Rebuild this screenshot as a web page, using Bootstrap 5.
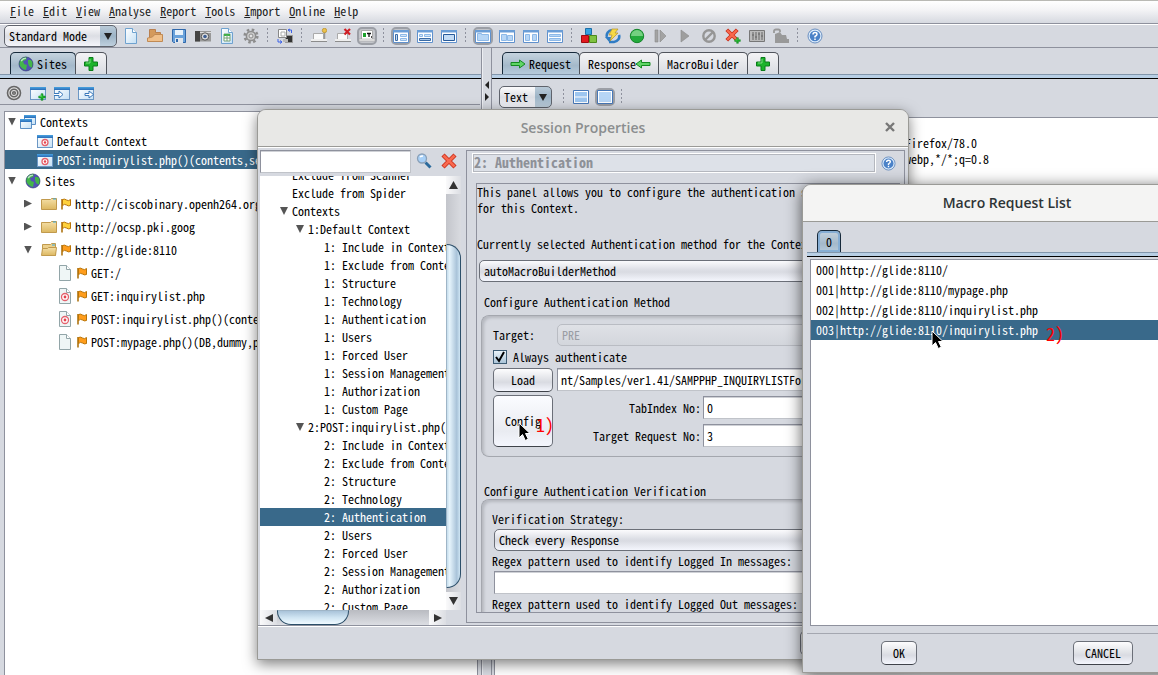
<!DOCTYPE html>
<html lang="en">
<head>
<meta charset="utf-8">
<meta name="viewport" content="width=device-width, initial-scale=1">
<title>Session Properties</title>
<link href="https://cdn.jsdelivr.net/npm/bootstrap@5.3.0/dist/css/bootstrap.min.css" rel="stylesheet">
<style>
:root{--face:#d6d9e0;--edge:#8e919d;--sel:#39698a;--mono:"Noto Sans Mono CJK JP","Liberation Mono","Noto Sans CJK JP",monospace}
body{font:12px/16px var(--mono);color:#000;background:var(--face)}
button,input,select{font:inherit;color:inherit}
svg{display:block;flex:none}
.menubar{height:24px;padding:0 10px;gap:9px;border-top:1px solid #b9b9b4;border-bottom:1px solid var(--edge);background:linear-gradient(#fff,#f4f4f6 40%,#d6d9e0)}
.menubar a{color:#222;text-decoration:none;line-height:20px}
.toolbar{height:24px;padding-left:4px;border-top:1px solid #fff;border-bottom:1px solid var(--edge)}
.tool{width:24px;height:22px;padding:0;border:0;background:none;display:flex;align-items:center;justify-content:center;flex:none}
.tool.on::before{content:"";position:absolute;width:20px;height:18px;border:2px solid #9c9fa6;border-radius:5px;background:#c3c5ca}
.tool.on{position:relative}
.tool svg{position:relative}
.dots{width:10px;height:16px;flex:none;background:linear-gradient(#8e919d 50%,transparent 50%) 4px 0/1px 4px repeat-y}
.combo{appearance:none;height:22px;padding:0 20px 0 4px;border:1px solid #5f636c;border-radius:5px;line-height:20px;
background:url("data:image/svg+xml,%3Csvg xmlns='http://www.w3.org/2000/svg' width='8' height='8'%3E%3Cpath d='M0 1h8L4 8z' fill='%23222'/%3E%3C/svg%3E") right 4px center no-repeat,linear-gradient(#b9cad8,#9db4c6 50%,#bfd0de) right/16px 100% no-repeat,linear-gradient(#fbfbfc,#dcdee4 50%,#f4f5fa)}
.mode{width:113px;margin-right:2px}
.view{width:53px;margin-right:7px}
.viewbar{padding:7px 0 9px 7px}
.tabs{height:27px;padding:4px 0 0 10px;border-bottom:1px solid #8296ab}
.tabs button{height:22px;padding:0 8px;border:1px solid #50545c;border-bottom:0;border-radius:5px 5px 0 0;background:linear-gradient(#f3f3f5,#d9dce2);display:flex;align-items:center;gap:4px;line-height:19px;margin-right:-1px}
.tabs svg{margin:0 -1px}
.tabs .on{border-color:#16293a;background:linear-gradient(#c5d3de,#a4b9ca 60%,#b6cadb)}
.tabs .ringed{box-shadow:inset 0 0 0 2px #86aed4}
.band{height:4px;background:#b8cfe5;border-bottom:1px solid #000}
.leftpane{width:481px;flex:none}
.subtools{height:26px;padding:3px 0 0 2px;border-bottom:1px solid var(--edge);margin-right:1px}
.pane{background:#fff;border:1px solid var(--edge)}
.sitetree{margin:6px 3px 0 4px}
.splitter{width:11px;flex:none;border:1px solid var(--edge);border-width:0 1px;box-shadow:inset 1px 0 #eceef2;padding-top:33px}
.message{padding:1px 0 0 2px;margin-left:2px}
.trow{display:flex;align-items:center;height:19px;white-space:pre;gap:4px}
.trow.tall{height:23px}
.tall .tw{margin-right:5px}
.picked{background:var(--sel);color:#fff}
.tw{width:8px;height:8px;background:#555;clip-path:polygon(0 0,100% 0,50% 100%);flex:none}
.tw.shut{clip-path:polygon(0 0,100% 50%,0 100%)}
.win{position:absolute;border:1px solid #9a9a96;background:var(--face);box-shadow:0 4px 14px rgba(0,0,0,.5);border-radius:9px 9px 0 0}
.caption{height:37px;font:600 14px/35px "Open Sans","Noto Sans",sans-serif;text-align:center;border-bottom:1px solid #9a9a96;border-radius:8px 8px 0 0;background:#e8e8e6;color:#8b8e8f;position:relative}
.close-x{position:absolute;right:11px;top:10px;padding:0;border:0;background:none}
#props{left:257px;top:109px;width:652px;height:551px}
#macro{left:802px;top:184px;width:410px;height:489px;box-shadow:0 3px 16px rgba(0,0,0,.65)}
#macro .caption{background:#f4f4f3;color:#2e3436}
.navcol{width:204px;flex:none;padding:2px 0 0 2px}
.finder{gap:1px;margin-bottom:3px}
.finder .field{width:151px;flex:none}
.field{border:1px solid #8e919d;border-right-color:#c0c3c9;border-bottom-color:#c0c3c9;background:#fff;box-shadow:inset 0 1px #cfd1d6;height:23px;padding:0 3px;border-radius:0;min-width:0}
.opts{width:186px;height:434px;overflow:hidden;background:#fff}
.opts ul{margin-top:-10px}
.opts .trow{height:18px}
.arrowbtn{border:0;padding:0;background:linear-gradient(90deg,#fafafb,#dcdee3);display:flex;align-items:center;justify-content:center;flex:none;width:17px}
.vbar{width:15px;background:linear-gradient(90deg,#c3c5cb,#d9dbe0)}
.vbar .arrowbtn{width:15px;height:18px}
.vthumb{height:344px;border:1px solid #2c4f69;border-left-color:#9fb5c7;border-radius:0 14px 14px 0;background:linear-gradient(90deg,#c5ddec,#e6f4fc 20%,#a9c3d9 75%,#cfe6f5)}
.hbar{height:15px;width:186px;background:linear-gradient(#b9bbc1,#dcdee3)}
.hthumb{width:72px;border:1px solid #2c4f69;border-top-color:#9fb5c7;border-radius:0 0 14px 14px;background:linear-gradient(#a9c3d9,#cfe4f2 50%,#f0faff)}
.detail{border:1px solid var(--edge);margin:2px 3px 2px 4px;padding:2px 4px 10px 5px;min-width:0;height:473px}
.head{height:20px;border:1px solid #fff;outline:1px solid #b4b7be;outline-offset:-2px;background:#dde1e8;color:#8e9198;font:700 14px/17px var(--mono);padding:0 1px}
.detail .tool{height:20px}
.scrollbody{border:1px solid var(--edge);margin:10px 0 0 4px;height:430px;overflow:hidden}
.pick{padding:8px 0 0 2px;margin-bottom:12px}
.legend1{margin:0 0 5px 7px}
.legend2{margin:26px 0 0 7px}
.grp{border:1px solid #a4a7ae;border-right:0;border-radius:8px;margin:0 0 0 4px;box-shadow:inset 2px 2px 3px #b5b8bf;padding:8px 8px 9px 11px;display:flex;flex-direction:column;gap:3px}
.grp.verify{padding:11px 8px 9px 12px;gap:2px}
.grp.verify label{margin-left:-2px}
.lead64{width:64px;flex:none}
.lead146{width:146px;padding-right:2px;text-align:right;flex:none}
.nums{gap:5px}
.drop{appearance:none;width:100%;height:22px;border:1px solid #6b6f78;border-radius:5px;padding:0 4px;background:linear-gradient(#fbfbfd,#dcdee5 45%,#d9dbe2 55%,#f4f6fd);display:block}
.drop:disabled{opacity:1;color:#9a9da4;border-color:#b9bcc3;background:linear-gradient(#dfe1e6,#d3d6dc)}
.push{border:1px solid #6b6f78;border-bottom-color:#3f434a;border-radius:5px;background:linear-gradient(#fdfdfe,#dfe1e6 50%,#d9dbe2 60%,#f4f6fd);padding:0;height:24px;line-height:20px}
.push.big{background:linear-gradient(#fbfcff,#e9ebf1 70%,#f4f6fd);height:52px}
.c60{width:60px;flex:none}
.c46{width:46px}
.c36{width:36px}
.ticks{gap:6px}
.tick{appearance:none;width:14px;height:14px;margin:0;border:1px solid #3d5c74;background:url("data:image/svg+xml,%3Csvg xmlns='http://www.w3.org/2000/svg' width='12' height='12'%3E%3Cpath d='M2 6l3 4 5-9' fill='none' stroke='%23000' stroke-width='2'/%3E%3C/svg%3E") center no-repeat,linear-gradient(#eaf3f9,#aac4d8)}
.foot{border-top:1px solid var(--edge);box-shadow:inset 0 1px #fff;padding-top:5px}
.reqs{margin:2px 0 0 7px;height:367px;width:401px}
.reqs li{height:20px;line-height:19px;padding-left:5px}
.rule{border-top:1px solid #a4a7b0;margin:7px 4px 0}
.answers{padding-top:7px}
.note{position:absolute;color:#f00;font-size:18px;line-height:20px;z-index:3}
.ptr{position:absolute;z-index:4}
</style>
</head>
<body class="vh-100 overflow-hidden d-flex flex-column position-relative">
<svg width="0" height="0" class="position-absolute" aria-hidden="true">
<defs>
<linearGradient id="gb" x2="0" y2="1"><stop stop-color="#4aa3e0"/><stop offset="1" stop-color="#2a6cb8"/></linearGradient>
<linearGradient id="gf" x2="0" y2="1"><stop stop-color="#f5e0a8"/><stop offset="1" stop-color="#dcb760"/></linearGradient>
<linearGradient id="gw" x2="1" y2="1"><stop stop-color="#fff"/><stop offset="1" stop-color="#c4e0f5"/></linearGradient>
<symbol id="plus" viewBox="0 0 16 16"><path d="M6 1.500h4V6h4.500v4H10v4.500H6V10H1.500V6H6z" fill="#1db32b" stroke="#0b7d1a"/><path d="M7 3v4H3" fill="none" stroke="#7be07e"/></symbol>
<symbol id="globe" viewBox="0 0 16 16"><circle cx="8" cy="8" r="7" fill="#5252b4"/><path d="M2 4q3-4 7-3l-1 3-3 1 1 3 3 1-1 5Q3 13 1 8zM10 4l3 0 2 3-1 5-3-2-1-3z" fill="#43b54a"/><path d="M3 5q2-3 5-3" stroke="#b8e8c0" stroke-width="1.500" fill="none"/><circle cx="8" cy="8" r="7" fill="none" stroke="#2c3570" stroke-width=".6"/></symbol>
<symbol id="target" viewBox="0 0 16 16"><g fill="none" stroke="#666" stroke-width="1.600"><circle cx="8" cy="8" r="6.500" fill="#e0e0e0"/><circle cx="8" cy="8" r="3.800"/><circle cx="8" cy="8" r="1.300"/></g></symbol>
<symbol id="frame" viewBox="0 0 16 16"><rect x=".5" y="2.500" width="15" height="12" fill="url(#gw)" stroke="#6c97c4"/><path d="M0 2h16v3H0z" fill="url(#gb)"/></symbol>
<symbol id="frameplus" viewBox="0 0 16 16"><use href="#frame"/><use href="#plus" x="8" y="8" width="8" height="8"/></symbol>
<symbol id="framein" viewBox="0 0 16 16"><use href="#frame"/><path d="M0 8.500h5V6l4 3.500L5 13v-2.500H0" fill="#fff" stroke="#3a79ba"/></symbol>
<symbol id="frameout" viewBox="0 0 16 16"><use href="#frame"/><path d="M7 8.500h4V6l4.500 3.500L11 13v-2.500H7z" fill="#fff" stroke="#3a79ba"/></symbol>
<symbol id="frametgt" viewBox="0 0 16 16"><use href="#frame"/><circle cx="8" cy="9.500" r="3" fill="#fff" stroke="#e4616c" stroke-width="1.300"/><circle cx="8" cy="9.500" r="1.200" fill="#e4414c"/></symbol>
<symbol id="frames" viewBox="0 0 16 16"><path d="M4.500 1.500h11v9h-11z" fill="url(#gw)" stroke="#5a8fc5"/><path d="M4 1h12v3H4z" fill="url(#gb)"/><path d="M.5 5.500h11v9H.5z" fill="url(#gw)" stroke="#5a8fc5"/><path d="M0 5h12v3H0z" fill="url(#gb)"/></symbol>
<symbol id="page" viewBox="0 0 16 16"><path d="M2.500.5h7l4 4v11h-11z" fill="url(#gw)" stroke="#6fa2cf"/><path d="M9.500.5v4h4" fill="#fff" stroke="#6fa2cf"/></symbol>
<symbol id="leaf" viewBox="0 0 16 16"><path d="M2.500.5h7l4 4v11h-11z" fill="#eff6f6" stroke="#92a5a8"/><path d="M9.500.5v4h4" fill="#fff" stroke="#92a5a8"/></symbol>
<symbol id="leaftgt" viewBox="0 0 16 16"><use href="#leaf"/><circle cx="8" cy="9" r="3.500" fill="#fff" stroke="#e4616c" stroke-width="1.300"/><circle cx="8" cy="9" r="1.400" fill="#e4414c"/></symbol>
<symbol id="folder" viewBox="0 0 16 16"><path d="M.5 3.500h9l1-1h5v11H.5z" fill="url(#gf)" stroke="#c19a4d"/><path d="M12 3h3" stroke="#39a8dd"/></symbol>
<symbol id="folderopen" viewBox="0 0 16 16"><path d="M1.500 13.500v-11h8l1-1h4v12z" fill="#ecd08c" stroke="#c19a4d"/><path d="M.5 13.500l1-7h5l1-1h8l-1 8z" fill="url(#gf)" stroke="#c19a4d"/><path d="M11 3h3" stroke="#39a8dd"/></symbol>
<symbol id="open" viewBox="0 0 16 16"><path d="M2.500 12V1.500h6v3h5V13z" fill="#d49a5c" stroke="#b98050"/><path d="M.5 13.500V10q6-.5 7-3.500h8v7z" fill="#f0c08a" stroke="#c08a54"/></symbol>
<symbol id="save" viewBox="0 0 16 16"><path d="M1.500 1.500h13v13h-12l-1-1z" fill="#6aa2db" stroke="#2f68ab"/><path d="M4 2h8v5H4z" fill="#e8f2fb"/><path d="M4 10h8v5H4z" fill="#dfe5ec"/><path d="M5 11h2v3H5z" fill="#2f68ab"/></symbol>
<symbol id="camera" viewBox="0 0 16 16"><path d="M0 3h16v10.500H0z" fill="#989898"/><path d="M0 3h5v10.500H0z" fill="#444"/><path d="M5 4h11v1H5z" fill="#ddd"/><circle cx="10" cy="8.500" r="3.700" fill="#ddd" stroke="#555"/><circle cx="10" cy="8.500" r="1.800" fill="#3e5f93"/></symbol>
<symbol id="sheet" viewBox="0 0 16 16"><use href="#page"/><path d="M5 6h6v7H5z" fill="#fff" stroke="#77a277"/><path d="M5 6h6v2H5z" fill="#3eaf46"/><path d="M5 10h6M8 7v6" stroke="#77a277"/></symbol>
<symbol id="gear" viewBox="0 0 16 16"><circle cx="8" cy="8" r="6.300" fill="none" stroke="#8d8d8d" stroke-width="2.600" stroke-dasharray="2.500 2.440"/><circle cx="8" cy="8" r="4.600" fill="#ccc" stroke="#8d8d8d" stroke-width="1.500"/><circle cx="8" cy="8" r="2" fill="#e4e4e4" stroke="#8d8d8d"/></symbol>
<symbol id="swap" viewBox="0 0 16 16"><path d="M8.500 7.500h7v7h-7z" fill="#333" stroke="#999"/><path d="M6 11h5v3H6z" fill="#bbb"/><path d="M1.500 1.500h8v8h-8z" fill="#fff" stroke="#888"/><path d="M4 4h4v4H4z" fill="#fff" stroke="#aaa"/><path d="M11 2h3.500v3M13 1l-2 1 2 1.500M1 11v3h3.500M3 12.500l2 1.500-2 1.500" fill="none" stroke="#3d62e8"/></symbol>
<symbol id="tab" viewBox="0 0 16 16"><path d="M2.500 11.500v-6h10v6z" fill="#fafafa" stroke="#aaa"/><path d="M0 11h16v2H0z" fill="#eee"/><path d="M0 13.500h16" stroke="#8c8c8c"/></symbol>
<symbol id="tabpin" viewBox="0 0 16 16"><use href="#tab"/><path d="M13.500 4v7" stroke="#999" stroke-width="1.500"/><circle cx="13.500" cy="2.500" r="2.200" fill="#edc24b" stroke="#b58a24" stroke-width=".7"/></symbol>
<symbol id="tabx" viewBox="0 0 16 16"><use href="#tab"/><path d="M9.500 1l5.500 5.500M15 1L9.500 6.500" stroke="#cf1f25" stroke-width="2.200"/></symbol>
<symbol id="tabt" viewBox="0 0 16 16"><path d="M2.500 2.500h11v9h-11z" fill="#fff" stroke="#aaa"/><path d="M0 11h16v2H0z" fill="#eee" stroke="#999" stroke-width=".5"/><path d="M4 5h3v4H4z" fill="#1ca12c"/><path d="M8 5.500h4M10 5.500V9M12 9h1" stroke="#111" stroke-width="1.300"/></symbol>
<symbol id="box" viewBox="0 0 16 16"><path d="M.5 2.500h15v12H.5z" fill="#fff" stroke="#5f90cc"/><path d="M0 2h16v2.500H0z" fill="#6a9dd6"/></symbol>
<symbol id="l1" viewBox="0 0 16 16"><use href="#box"/><path d="M2.500 6.500h2v6h-2z" fill="#c4dcf5" stroke="#3b6ba5"/><path d="M7.500 6.500h6v2h-6zM7.500 10.500h6v2h-6z" fill="#d4e6f8" stroke="#8db9e8"/></symbol>
<symbol id="l2" viewBox="0 0 16 16"><use href="#box"/><path d="M2.500 6.500h3v2h-3zM7.500 6.500h6v2h-6z" fill="#d4e6f8" stroke="#8db9e8"/><path d="M2.500 10.500h11v2h-11z" fill="#a9c8ea" stroke="#3b6ba5"/></symbol>
<symbol id="l3" viewBox="0 0 16 16"><use href="#box"/><path d="M2.500 6.500h11v6h-11z" fill="#c4dcf5" stroke="#275a9a"/></symbol>
<symbol id="l4" viewBox="0 0 16 16"><use href="#box"/><path d="M2.500 12.500v-7h4v1h7v6z" fill="#b7d6f6" stroke="#8db9e8"/></symbol>
<symbol id="l5" viewBox="0 0 16 16"><use href="#box"/><path d="M2.500 12.500v-6h5v6zM8.500 12.500v-5h5v5z" fill="#b7d6f6" stroke="#8db9e8"/></symbol>
<symbol id="l6" viewBox="0 0 16 16"><use href="#box"/><path d="M2.500 6.500h4v6h-4zM9.500 6.500h4v6h-4z" fill="#b7d6f6" stroke="#8db9e8"/></symbol>
<symbol id="l7" viewBox="0 0 16 16"><use href="#box"/><path d="M2.500 6.500h11v2h-11zM2.500 10.500h11v2h-11z" fill="#b7d6f6" stroke="#8db9e8"/></symbol>
<symbol id="v1" viewBox="0 0 16 16"><path d="M.5 1.500h15v13H.5z" fill="#fff" stroke="#4778b8"/><path d="M2 3h12v4.500H2zM2 8.500h12V13H2z" fill="#9dc6f0"/></symbol>
<symbol id="v2" viewBox="0 0 16 16"><path d="M.5 1.500h15v13H.5z" fill="#fff" stroke="#4778b8"/><path d="M2 3h12v10H2z" fill="#b7d6f6"/></symbol>
<symbol id="blocks" viewBox="0 0 16 16"><path d="M4.500.5h6v6h-6z" fill="#35a2e0" stroke="#1c6fa8"/><path d="M.5 7.500h7v7h-7z" fill="#e2191f" stroke="#9d0c12"/><path d="M8.500 7.500h7v7h-7z" fill="#7fc240" stroke="#4b8a1c"/></symbol>
<symbol id="bolt" viewBox="0 0 16 16"><path d="M2 9a6 5.500 0 0 1 5-7M14 7a6 5.500 0 0 1-5 7H4" fill="none" stroke="#2f7cc4" stroke-width="2.600"/><path d="M0 9h6l-1 6z" fill="#2f7cc4"/><path d="M7 1h6l-3 4h3l-8 8 2-6H4z" fill="#f7d944" stroke="#b4942a" stroke-width=".7"/></symbol>
<symbol id="green" viewBox="0 0 16 16"><circle cx="8" cy="8" r="6.700" fill="#24aa3c" stroke="#15852b"/><path d="M2 8a6 6 0 0 1 12 0z" fill="#74d080"/></symbol>
<symbol id="step" viewBox="0 0 16 16"><path d="M2 2h3v12H2zM7 2l6 6-6 6z" fill="#a3a3a3" stroke="#8a8a8a" stroke-width=".6"/></symbol>
<symbol id="play" viewBox="0 0 16 16"><path d="M4 2l8 6-8 6z" fill="#9e9e9e" stroke="#8a8a8a" stroke-width=".6"/></symbol>
<symbol id="ban" viewBox="0 0 16 16"><circle cx="8" cy="8" r="5.700" fill="none" stroke="#969696" stroke-width="2.400"/><path d="M4 12l8-8" stroke="#969696" stroke-width="2.400"/></symbol>
<symbol id="cross" viewBox="0 0 16 16"><path d="M2 2l12 12M14 2L2 14" stroke="#c8301d" stroke-width="4.400"/><path d="M2.500 2.500l11 11M13.500 2.500l-11 11" stroke="#f9694e" stroke-width="2.600"/></symbol>
<symbol id="crossplus" viewBox="0 0 16 16"><use href="#cross" width="14" height="14"/><use href="#plus" x="9" y="9" width="7" height="7"/></symbol>
<symbol id="mixer" viewBox="0 0 16 16"><path d="M.5 2.500h15v11H.5z" fill="#bbb" stroke="#777"/><path d="M4 4v8M7 4v8M10 4v8M13 4v8M3 7h2M6 9h2M9 6h2M12 8h2" stroke="#666"/></symbol>
<symbol id="oil" viewBox="0 0 16 16"><path d="M1 5V3q0-1.500 2-1.500h2.500Q7 1.500 7 3v1" fill="none" stroke="#999" stroke-width="1.800"/><path d="M2 6l5-2 2 3h4l1 4h2v4H2z" fill="#999"/></symbol>
<symbol id="help" viewBox="0 0 16 16"><circle cx="8" cy="8" r="7" fill="#dcebfa" stroke="#6a8fc0"/><circle cx="8" cy="8" r="5.300" fill="#4b82c8"/><path d="M6 6.500q0-2 2-2t2 1.700q0 1-2 2.300v1M8 10.500V12" fill="none" stroke="#fff" stroke-width="1.500"/></symbol>
<symbol id="arr" viewBox="0 0 16 16"><path d="M1 6.500h8.500V4l5.500 4-5.500 4V9.500H1z" fill="#5fd565" stroke="#158a21"/></symbol>
<symbol id="flag" viewBox="0 0 10 12"><path d="M1 11.500V1" stroke="#a86a00" stroke-width="1.500"/><path d="M1.500 1.500q2-1 4 .5t4-.5v6q-2 1-4-.5t-4 .5z" fill="currentColor" stroke="#b87409"/></symbol>
<symbol id="glass" viewBox="0 0 16 16"><path d="M9.500 9.500l5 5" stroke="#2b6a9c" stroke-width="3"/><circle cx="6" cy="5.500" r="4.500" fill="#a8d0f7" stroke="#8aa0b8" stroke-width="1.300"/><path d="M4 4q1-1 3-1" stroke="#fff" stroke-width="1.500" fill="none"/></symbol>
<symbol id="mouse" viewBox="0 0 14 20"><path d="M1 1v15l3.500-3.500 2.800 6 3-1.400-2.800-5.600H12z" fill="#000" stroke="#fff"/></symbol>
</defs></svg>

<nav class="menubar d-flex flex-shrink-0" aria-label="Main menu">
<a href="#"><u>F</u>ile</a><a href="#"><u>E</u>dit</a><a href="#"><u>V</u>iew</a><a href="#"><u>A</u>nalyse</a><a href="#"><u>R</u>eport</a><a href="#"><u>T</u>ools</a><a href="#"><u>I</u>mport</a><a href="#"><u>O</u>nline</a><a href="#"><u>H</u>elp</a>
</nav>
<div class="toolbar d-flex align-items-center flex-shrink-0" id="bar">
<select class="combo mode" aria-label="Mode"><option>Standard Mode</option></select>
</div>

<main class="d-flex flex-grow-1 overflow-hidden">
<section class="leftpane d-flex flex-column">
<div class="tabs d-flex"><button class="on"><svg width="16" height="16"><use href="#globe"/></svg>Sites</button><button aria-label="Add tab"><svg width="16" height="16"><use href="#plus"/></svg></button></div>
<div class="band"></div>
<div class="subtools d-flex">
<button class="tool" aria-label="Scope"><svg width="16" height="16"><use href="#target"/></svg></button>
<button class="tool" aria-label="New context"><svg width="16" height="16"><use href="#frameplus"/></svg></button>
<button class="tool" aria-label="Import context"><svg width="16" height="16"><use href="#framein"/></svg></button>
<button class="tool" aria-label="Export context"><svg width="16" height="16"><use href="#frameout"/></svg></button>
</div>
<ul class="pane sitetree list-unstyled mb-0 flex-grow-1 overflow-hidden border-bottom-0" id="sites"></ul>
</section>
<div class="splitter d-flex flex-column align-items-center gap-1">
<svg width="6" height="8"><path d="M5 0v8L1 4z" fill="#222"/></svg><svg width="6" height="8"><path d="M1 0v8l4-4z" fill="#222"/></svg>
</div>
<section class="d-flex flex-column flex-grow-1 overflow-hidden">
<div class="tabs d-flex"><button class="on"><svg width="16" height="16"><use href="#arr"/></svg>Request</button><button class="gap-0">Response<svg width="16" height="16"><use href="#arr" transform="rotate(180 8 8)"/></svg></button><button>MacroBuilder</button><button aria-label="Add tab"><svg width="16" height="16"><use href="#plus"/></svg></button></div>
<div class="band"></div>
<div class="viewbar d-flex align-items-center">
<select class="combo view" aria-label="View"><option>Text</option></select><span class="dots"></span>
<button class="tool" aria-label="Split view"><svg width="16" height="16"><use href="#v1"/></svg></button><button class="tool on" aria-label="Single view"><svg width="16" height="16"><use href="#v2"/></svg></button><span class="dots"></span>
</div>
<div class="pane message flex-grow-1 text-nowrap overflow-hidden border-end-0 border-bottom-0">
<div>POST http://glide:8110/inquirylist.php HTTP/1.1</div>
<div>User-Agent: Mozilla/5.0 (X11; Linux x86_64; rv:78.0) Gecko/20100101 Firefox/78.0</div>
<div>Accept: text/html,application/xhtml+xml,application/xml;q=0.9,image/webp,*/*;q=0.8</div>
</div>
</section>
</main>

<section class="win" id="props" role="dialog" aria-label="Session Properties">
<div class="caption">Session Properties<button class="close-x" aria-label="Close"><svg width="14" height="14"><path d="M3 3l8 8M11 3l-8 8" stroke="#777" stroke-width="2.400"/></svg></button></div>
<div class="d-flex border-top border-white">
<div class="navcol">
<div class="finder d-flex"><input class="field" aria-label="Search"><button class="tool ms-0" aria-label="Find"><svg width="16" height="16"><use href="#glass"/></svg></button><button class="tool" aria-label="Clear"><svg width="16" height="16"><use href="#cross"/></svg></button></div>
<div class="d-flex">
<div class="opts"><ul class="list-unstyled mb-0" id="opts"></ul></div>
<div class="vbar d-flex flex-column"><button class="arrowbtn" aria-label="Up"><svg width="9" height="8"><path d="M0 8h9L4.500 0z" fill="#333"/></svg></button><div class="flex-grow-1"></div><div class="vthumb flex-shrink-0"></div><button class="arrowbtn mt-1" aria-label="Down"><svg width="9" height="8"><path d="M0 0h9L4.500 8z" fill="#333"/></svg></button></div>
</div>
<div class="hbar d-flex"><button class="arrowbtn" aria-label="Left"><svg width="8" height="8"><path d="M8 0v8L0 4z" fill="#333"/></svg></button><div class="hthumb"></div><div class="flex-grow-1"></div><button class="arrowbtn" aria-label="Right"><svg width="8" height="8"><path d="M0 0v8l8-4z" fill="#333"/></svg></button></div>
</div>
<div class="detail flex-grow-1">
<div class="d-flex align-items-center"><div class="head flex-grow-1">2: Authentication</div><button class="tool" aria-label="Help"><svg width="15" height="15"><use href="#help"/></svg></button></div>
<div class="scrollbody">
<p class="mb-0">This panel allows you to configure the authentication settings<br>for this Context.</p>
<label for="meth" class="d-block mt-3 pt-1">Currently selected Authentication method for the Context:</label>
<div class="pick"><select class="drop" id="meth"><option>autoMacroBuilderMethod</option></select></div>
<div class="legend1">Configure Authentication Method</div>
<div class="grp">
<div class="d-flex align-items-center"><label for="tgt" class="lead64">Target:</label><div class="flex-grow-1"><select class="drop" id="tgt" disabled><option>PRE</option></select></div></div>
<div class="ticks d-flex align-items-center"><input type="checkbox" class="tick" id="always" checked><label for="always">Always authenticate</label></div>
<div class="d-flex gap-1"><button class="push c60">Load</button><input class="field flex-grow-1" aria-label="File" value="nt/Samples/ver1.41/SAMPPHP_INQUIRYLISTForm.txt"></div>
<div class="d-flex gap-1"><button class="push big c60">Config</button>
<div class="nums flex-grow-1 d-flex flex-column justify-content-end">
<div class="d-flex align-items-center"><label for="ti" class="lead146">TabIndex No:</label><input id="ti" class="field flex-grow-1" value="0"></div>
<div class="d-flex align-items-center"><label for="tr" class="lead146">Target Request No:</label><input id="tr" class="field flex-grow-1" value="3"></div>
</div></div>
</div>
<div class="legend2">Configure Authentication Verification</div>
<div class="grp verify">
<label for="vs">Verification Strategy:</label>
<select class="drop" id="vs"><option>Check every Response</option></select>
<label for="ri">Regex pattern used to identify Logged In messages:</label>
<input class="field w-100" id="ri">
<label for="ro">Regex pattern used to identify Logged Out messages:</label>
<input class="field w-100" id="ro">
</div>
</div>
</div>
</div>
<div class="foot d-flex justify-content-end gap-2 px-2"><button class="push c46">Cancel</button><button class="push c46">OK</button></div>
</section>

<section class="win" id="macro" role="dialog" aria-label="Macro Request List">
<div class="caption">Macro Request List</div>
<div class="tabs d-flex ms-1 mt-1"><button class="on ringed">0</button></div>
<div class="band ms-1"></div>
<ul class="pane reqs list-unstyled mb-0">
<li>000|http://glide:8110/</li><li>001|http://glide:8110/mypage.php</li><li>002|http://glide:8110/inquirylist.php</li><li class="picked">003|http://glide:8110/inquirylist.php</li>
</ul>
<div class="rule"></div>
<div class="answers d-flex justify-content-around"><button class="push c36">OK</button><button class="push c60">CANCEL</button></div>
</section>

<span class="note" style="left:536px;top:414px">1)</span>
<span class="note" style="left:1046px;top:323px">2)</span>
<svg class="ptr" style="left:518px;top:422px" width="14" height="20"><use href="#mouse"/></svg>
<svg class="ptr" style="left:931px;top:330px" width="14" height="20"><use href="#mouse"/></svg>

<script>
const ic=(n,w=16)=>`<svg width="${w}" height="${w}"><use href="#${n}"/></svg>`;
document.getElementById('bar').insertAdjacentHTML('beforeend',
 'page open save camera sheet gear | swap | tabpin tabx tabt* | l1* l2 l3 | l4* l5 l6 l7 | blocks bolt green step play ban crossplus mixer oil | help'.split(' ').map(n=>
 n==='|'?'<span class="dots"></span>':`<button class="tool${n.endsWith('*')?' on':''}" aria-label="${n.replace('*','')}">${ic(n.replace('*',''))}</button>`).join(''));
// [indent, twisty, icon, flag colour, label, row class]
const sites=[[3,'tw','frames','','Contexts',''],[32,'','frametgt','','Default Context',''],[32,'','frametgt','','POST:inquirylist.php()(contents,session,subject)','picked'],
[3,'tw','globe','','Sites','tall'],[19,'tw shut','folder','#ffd23c','http://ciscobinary.openh264.org','tall'],[19,'tw shut','folder','#ffd23c','http://ocsp.pki.goog','tall'],[19,'tw','folderopen','#ff9d1c','http://glide:8110','tall'],
[52,'','leaf','#ff9d1c','GET:/','tall'],[52,'','leaftgt','#ff9d1c','GET:inquirylist.php','tall'],[52,'','leaftgt','#ff9d1c','POST:inquirylist.php()(contents,subject)','tall'],[52,'','leaf','#ff9d1c','POST:mypage.php()(DB,dummy,pass)','tall']];
document.getElementById('sites').innerHTML=sites.map(([p,t,i,f,l,c])=>`<li class="trow ${c}" style="padding-left:${p}px">${t?`<span class="${t}"></span>`:''}${ic(i)}${f?`<svg width="10" height="12" color="${f}"><use href="#flag"/></svg>`:''}<span>${l}</span></li>`).join('');
const sub=['Include in Context','Exclude from Context','Structure','Technology','Authentication','Users','Forced User','Session Management','Authorization','Custom Page'];
const rows=[[32,'','Exclude from Scanner'],[32,'','Exclude from Spider'],[20,'tw','Contexts'],[36,'tw','1:Default Context'],...sub.map(s=>[64,'','1: '+s]),[36,'tw','2:POST:inquirylist.php()(contents)'],...sub.map(s=>[64,'','2: '+s])];
document.getElementById('opts').innerHTML=rows.map(([p,t,l])=>`<li class="trow ${l==='2: Authentication'?'picked':''}" style="padding-left:${p}px">${t?`<span class="${t}"></span>`:''}<span>${l}</span></li>`).join('');
</script>
<script src="https://cdn.jsdelivr.net/npm/bootstrap@5.3.0/dist/js/bootstrap.bundle.min.js"></script>
</body>
</html>
